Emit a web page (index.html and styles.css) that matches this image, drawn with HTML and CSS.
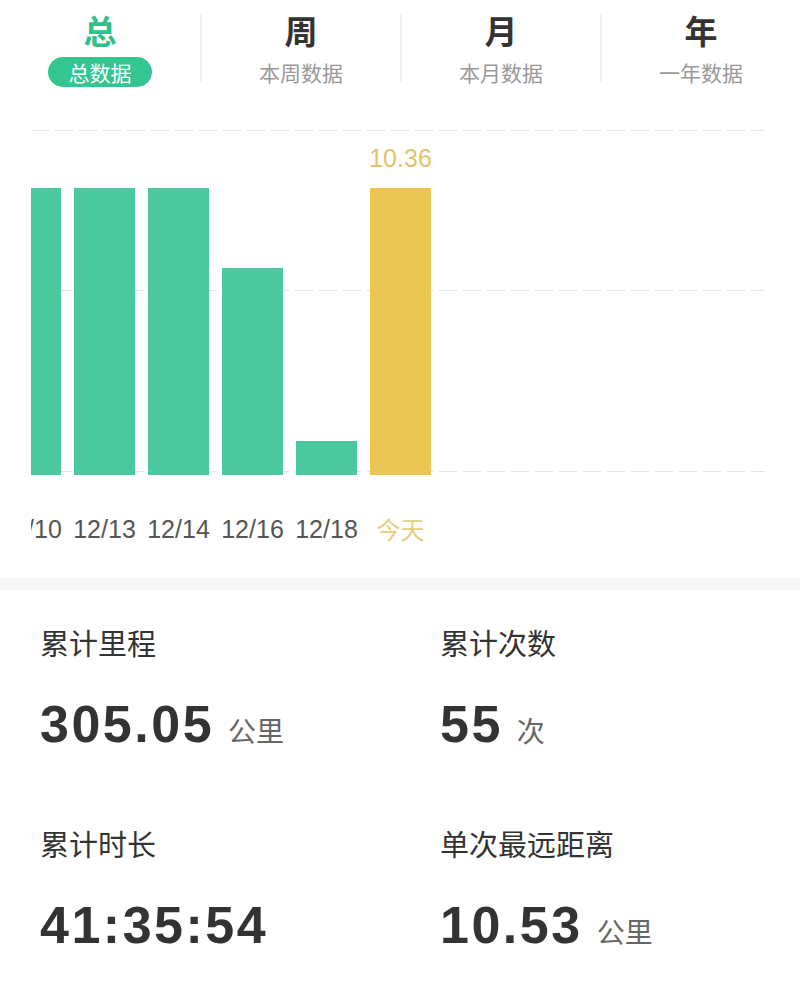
FILE: index.html
```html
<!DOCTYPE html>
<html lang="zh">
<head>
<meta charset="utf-8">
<title>数据统计</title>
<link rel="stylesheet" href="styles.css">
</head>
<body>
<div class="page">
  <div class="tabs">
    <div class="tab active">
      <div class="tab-main">总</div>
      <div class="tab-sub pill">总数据</div>
    </div>
    <div class="tab">
      <div class="tab-main">周</div>
      <div class="tab-sub">本周数据</div>
    </div>
    <div class="tab">
      <div class="tab-main">月</div>
      <div class="tab-sub">本月数据</div>
    </div>
    <div class="tab">
      <div class="tab-main">年</div>
      <div class="tab-sub">一年数据</div>
    </div>
  </div>

  <div class="chart">
    <div class="plot">
      <div class="grid g1"></div>
      <div class="grid g2"></div>
      <div class="grid g3"></div>
      <div class="bars">
        <div class="col"><div class="bar" style="height:287px"></div></div>
        <div class="col"><div class="bar" style="height:287px"></div></div>
        <div class="col"><div class="bar" style="height:287px"></div></div>
        <div class="col"><div class="bar" style="height:207px"></div></div>
        <div class="col"><div class="bar" style="height:34px"></div></div>
        <div class="col"><div class="value">10.36</div><div class="bar today" style="height:287px"></div></div>
      </div>
    </div>
    <div class="labels">
      <div class="label">12/10</div>
      <div class="label">12/13</div>
      <div class="label">12/14</div>
      <div class="label">12/16</div>
      <div class="label">12/18</div>
      <div class="label today-label">今天</div>
    </div>
  </div>

  <div class="band"></div>

  <div class="stats">
    <div class="stat">
      <div class="stat-label">累计里程</div>
      <div class="stat-value"><span class="num">305.05</span><span class="unit">公里</span></div>
    </div>
    <div class="stat">
      <div class="stat-label">累计次数</div>
      <div class="stat-value"><span class="num">55</span><span class="unit">次</span></div>
    </div>
    <div class="stat">
      <div class="stat-label">累计时长</div>
      <div class="stat-value"><span class="num">41:35:54</span></div>
    </div>
    <div class="stat">
      <div class="stat-label">单次最远距离</div>
      <div class="stat-value"><span class="num">10.53</span><span class="unit">公里</span></div>
    </div>
  </div>
</div>
</body>
</html>
```

FILE: styles.css
```css
* { box-sizing: border-box; }
html, body { margin: 0; padding: 0; background: #fff; }
body {
  font-family: "Liberation Sans", "Noto Sans CJK SC", sans-serif;
  color: #333;
  width: 800px;
  height: 981px;
  overflow: hidden;
}
.page { width: 800px; }

/* Tabs */
.tabs {
  display: flex;
  padding-top: 13px;
}
.tab {
  width: 200px;
  display: flex;
  flex-direction: column;
  align-items: center;
  border-left: 2px solid #f0f0f0;
  height: 70px;
}
.tab:first-child { border-left: none; }
.tab-main {
  font-family: "Noto Sans CJK SC", sans-serif;
  font-size: 33px;
  font-weight: 700;
  line-height: 34px;
  color: #333;
}
.tab.active .tab-main { color: #2fc18b; }
.tab-sub {
  margin-top: 10px;
  font-family: "Noto Sans CJK SC", sans-serif;
  font-size: 21px;
  line-height: 30px;
  color: #999;
}
.pill {
  width: 104px;
  height: 30px;
  border-radius: 15px;
  background: #33c690;
  color: #fff;
  text-align: center;
}

/* Chart */
.chart {
  margin-top: 47px;
  margin-left: 31px;
  width: 734px;
  overflow: hidden;
}
.plot {
  position: relative;
  height: 345px;
}
.grid {
  position: absolute;
  left: 0;
  right: 0;
  height: 1px;
  background-image: linear-gradient(to right, #e4e4e4 0, #e4e4e4 18px, transparent 18px);
  background-size: 24px 1px;
  background-repeat: repeat-x;
}
.g1 { top: 0; }
.g2 { top: 160px; }
.g3 { top: 341px; }
.bars {
  position: relative;
  display: flex;
  align-items: flex-end;
  gap: 13px;
  height: 345px;
  margin-left: -31px;
}
.col {
  width: 61px;
  display: flex;
  flex-direction: column;
  align-items: center;
}
.bar {
  width: 61px;
  background: #4cc89e;
}
.bar.today { background: #e9c552; }
.value {
  font-size: 25px;
  line-height: 30px;
  color: #e2c466;
  margin-bottom: 15px;
}
.labels {
  display: flex;
  gap: 13px;
  margin-left: -31px;
  margin-top: 36px;
  height: 36px;
}
.label {
  width: 61px;
  height: 36px;
  white-space: nowrap;
  display: flex;
  justify-content: center;
  align-items: center;
  font-size: 25px;
  line-height: 36px;
  color: #555;
}
.today-label {
  font-family: "Noto Sans CJK SC", sans-serif;
  font-size: 24px;
  color: #e5cf7c;
}

/* Band */
.band {
  margin-top: 31px;
  height: 12px;
  background: #f6f7f7;
}

/* Stats */
.stats {
  display: grid;
  grid-template-columns: 400px 400px;
  padding-top: 32px;
  row-gap: 56px;
}
.stat { padding-left: 40px; }
.stat-label {
  font-family: "Noto Sans CJK SC", sans-serif;
  font-size: 29px;
  line-height: 40px;
  color: #333;
}
.stat-value {
  margin-top: 32px;
  line-height: 60px;
  white-space: nowrap;
}
.num {
  font-family: "Liberation Sans", sans-serif;
  font-size: 52px;
  font-weight: 700;
  letter-spacing: 2.5px;
  color: #333;
}
.unit {
  font-family: "Noto Sans CJK SC", sans-serif;
  font-size: 28px;
  color: #666;
  margin-left: 14px;
}
```
